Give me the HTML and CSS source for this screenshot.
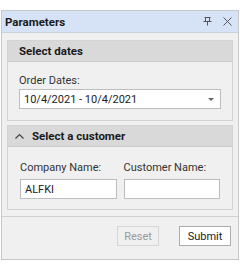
FILE: index.html
```html
<!DOCTYPE html>
<html lang="en">
<head>
    <meta charset="UTF-8">
    <title>Parameters</title>
    <link rel="stylesheet" href="styles.css">
</head>
<body>
    <div class="panel">
        <div class="panel-header">
            <span class="panel-title">Parameters</span>
            <span class="panel-tools">
                <svg class="tool" width="9" height="9" viewBox="0 0 9 9">
                    <path d="M1.5 0.5h6M2.5 0.5v4M6.5 0.5v4M0.5 4.5h8M4.5 4.5v4" stroke="#555" stroke-width="1" fill="none"/>
                </svg>
                <svg class="tool" width="9" height="9" viewBox="0 0 9 9">
                    <path d="M0.5 0.5l8 8M8.5 0.5l-8 8" stroke="#555" stroke-width="1" fill="none"/>
                </svg>
            </span>
        </div>

        <div class="panel-body">
            <div class="group">
                <div class="group-header">Select dates</div>
                <div class="group-body">
                    <label class="field-label">Order Dates:</label>
                    <div class="combo">
                        <span>10/4/2021 - 10/4/2021</span>
                        <svg width="6" height="3" viewBox="0 0 6 3"><path d="M0 0h6L3 3z" fill="#666"/></svg>
                    </div>
                </div>
            </div>

            <div class="group">
                <div class="group-header">
                    <svg class="chevron" width="9" height="6" viewBox="0 0 9 6"><path d="M0.5 5.5L4.5 1.5L8.5 5.5" stroke="#444" stroke-width="1.2" fill="none"/></svg>
                    Select a customer
                </div>
                <div class="group-body fields">
                    <div class="field">
                        <label class="field-label">Company Name:</label>
                        <input type="text" class="text-input" value="ALFKI">
                    </div>
                    <div class="field">
                        <label class="field-label">Customer Name:</label>
                        <input type="text" class="text-input" value="">
                    </div>
                </div>
            </div>
        </div>

        <div class="panel-footer">
            <button class="btn btn-reset btn-disabled">Reset</button>
            <button class="btn btn-submit">Submit</button>
        </div>
    </div>
</body>
</html>
```

FILE: styles.css
```css
* {
    margin: 0;
    padding: 0;
    box-sizing: border-box;
}

body {
    font-family: Roboto, sans-serif;
    font-size: 11px;
    color: #222;
    background: #ffffff;
}

.panel {
    width: 238px;
    height: 250px;
    margin: 10px 0 0 1px;
    border: 1px solid #c8c8c8;
    background: #f0f0f0;
    display: flex;
    flex-direction: column;
}

.panel-header {
    height: 22px;
    background: #d6e3f6;
    border-bottom: 1px solid #c8d0dc;
    display: flex;
    align-items: center;
    justify-content: space-between;
    padding: 0 6px 0 3px;
}

.panel-title {
    font-weight: 700;
    font-size: 11.5px;
    color: #1a1a1a;
}

.panel-tools {
    display: flex;
    gap: 11px;
    align-items: center;
}

.panel-body {
    padding: 7px 5px 0 5px;
    display: flex;
    flex-direction: column;
    gap: 4px;
}

.group {
    border: 1px solid #d4d4d4;
}

.group-header {
    height: 21px;
    background: #d9d9d9;
    border-bottom: 1px solid #cacaca;
    font-weight: 700;
    font-size: 11.5px;
    color: #1a1a1a;
    display: flex;
    align-items: center;
    padding-left: 11px;
    gap: 8px;
}

.group-header .chevron {
    margin-left: -4px;
}

.group-body {
    padding: 11px 11px 11px 11px;
}

.field-label {
    display: block;
    color: #333;
    line-height: 15px;
    margin-bottom: 1px;
}

.combo {
    height: 20px;
    border: 1px solid #bdbdbd;
    background: #fff;
    display: flex;
    align-items: center;
    justify-content: space-between;
    padding: 0 6px 0 4px;
}

.fields {
    display: flex;
    gap: 7px;
    padding: 13px 12px 10px 12px;
}

.fields .field-label {
    margin-bottom: 4px;
}

.field {
    flex: 1;
}

.text-input {
    display: block;
    width: 100%;
    height: 20px;
    border: 1px solid #bdbdbd;
    background: #fff;
    font-family: inherit;
    font-size: 11px;
    padding: 0 4px;
    color: #222;
}

.panel-footer {
    margin-top: auto;
    border-top: 1px solid #d0d0d0;
    height: 43px;
    display: flex;
    justify-content: flex-end;
    align-items: center;
    gap: 20px;
    padding: 0 7px 4px 0;
}

.btn {
    height: 20px;
    border: 1px solid #adadad;
    background: #fff;
    font-family: inherit;
    font-size: 11px;
    color: #222;
}

.btn-reset {
    width: 42px;
}

.btn-submit {
    width: 52px;
}

.btn-disabled {
    border-color: #d6d6d6;
    background: #f0f0f0;
    color: #9a9a9a;
}
```
